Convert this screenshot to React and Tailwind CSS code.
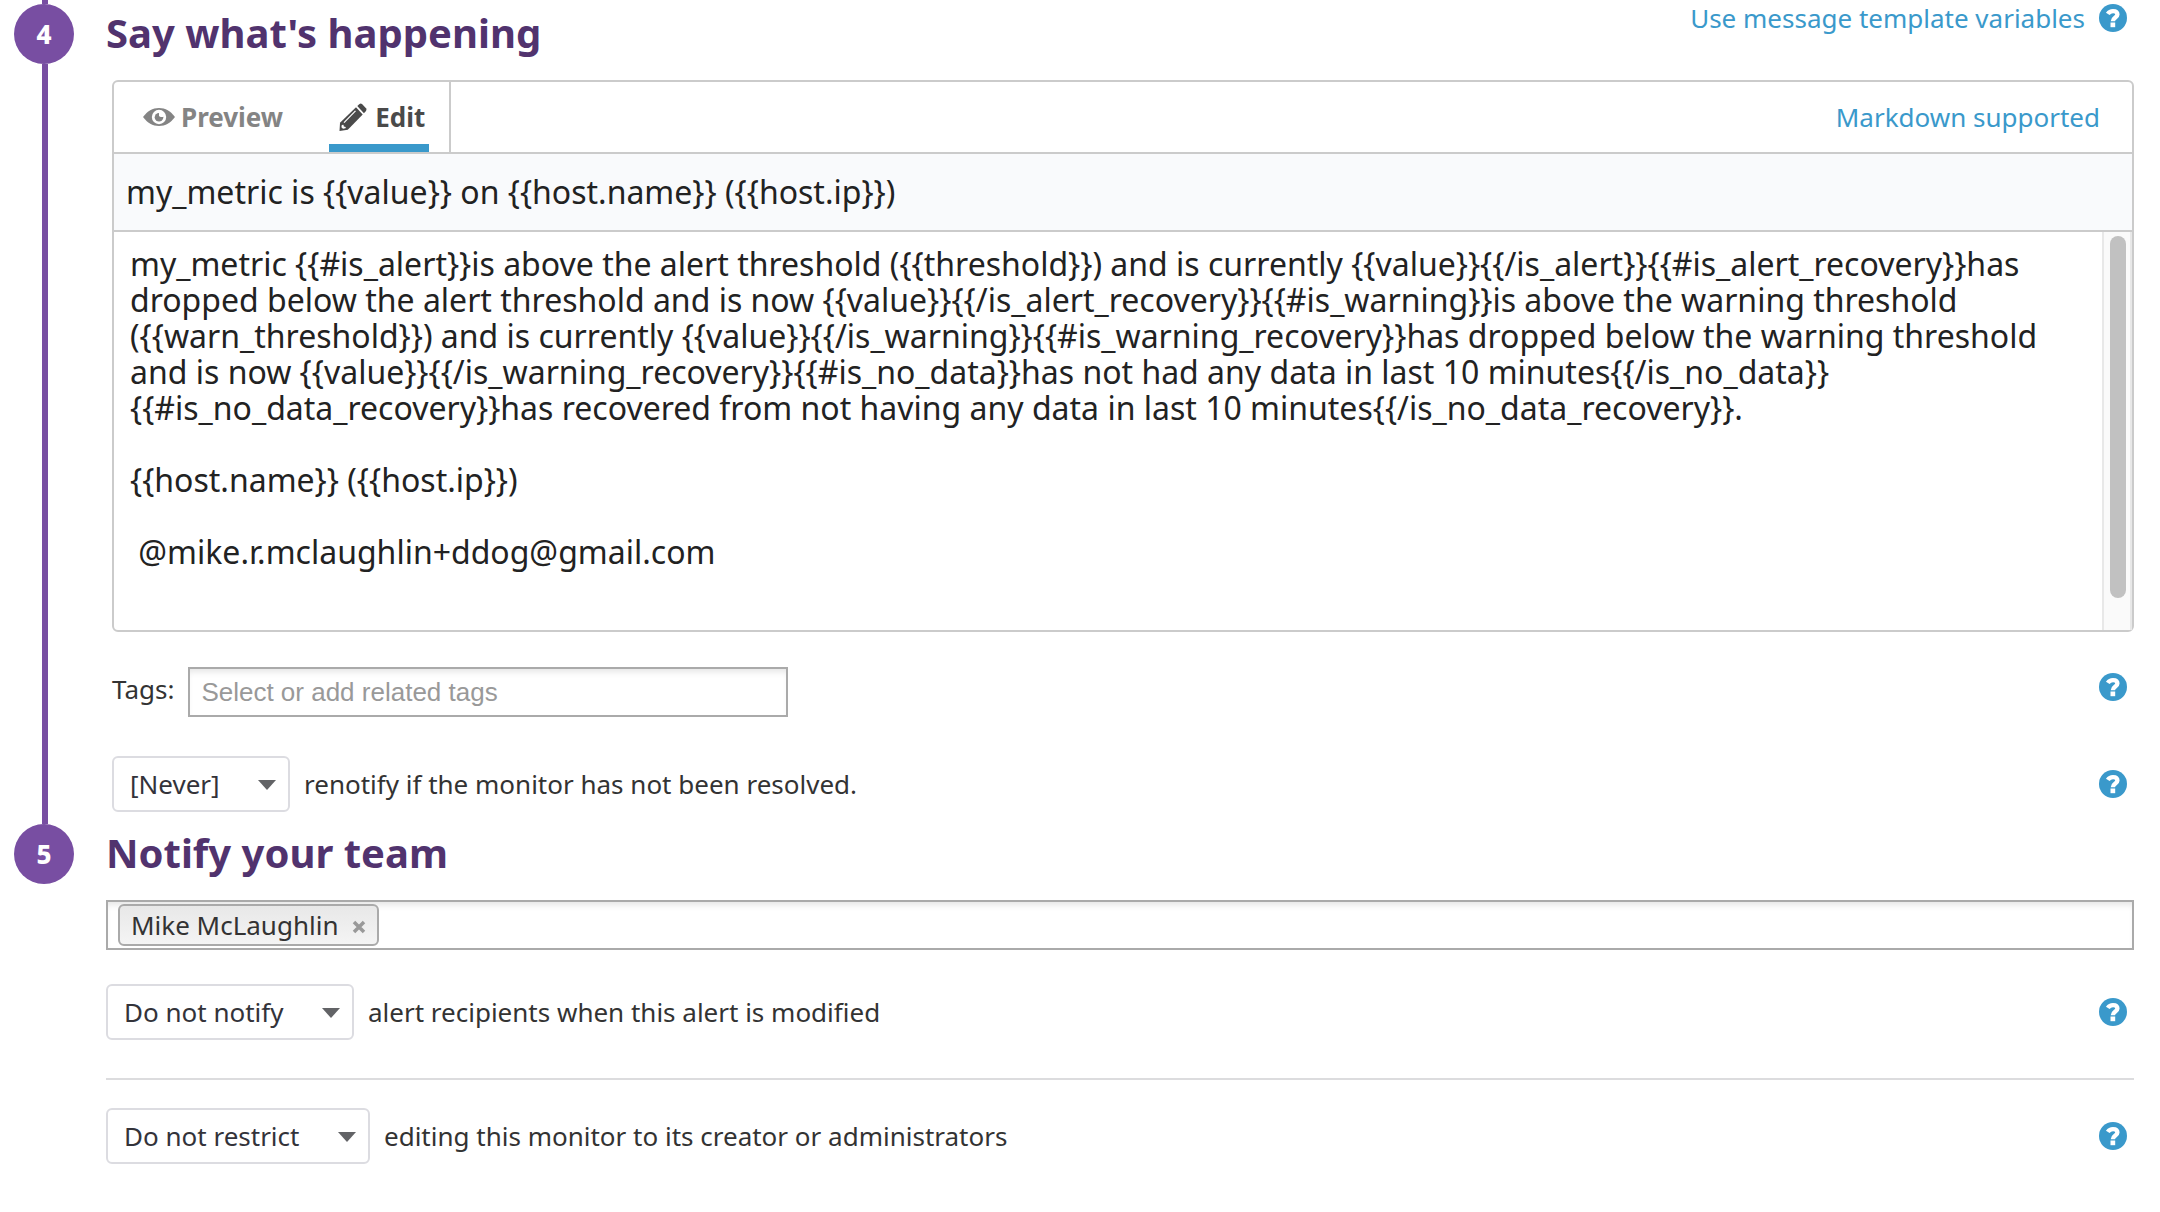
import React from "react";

const message = `my_metric {{#is_alert}}is above the alert threshold ({{threshold}}) and is currently {{value}}{{/is_alert}}{{#is_alert_recovery}}has dropped below the alert threshold and is now {{value}}{{/is_alert_recovery}}{{#is_warning}}is above the warning threshold ({{warn_threshold}}) and is currently {{value}}{{/is_warning}}{{#is_warning_recovery}}has dropped below the warning threshold and is now {{value}}{{/is_warning_recovery}}{{#is_no_data}}has not had any data in last 10 minutes{{/is_no_data}} {{#is_no_data_recovery}}has recovered from not having any data in last 10 minutes{{/is_no_data_recovery}}.

{{host.name}} ({{host.ip}})

 @mike.r.mclaughlin+ddog@gmail.com`;

function HelpButton({ label }) {
  return (
    <button type="button" aria-label={label} className="block h-7 w-7 shrink-0 text-[#3a99cb]">
      <svg viewBox="0 0 28 28" className="h-7 w-7" aria-hidden="true">
        <circle cx="14" cy="14" r="14" fill="currentColor" />
        <path d="M8.800 9.900C10.200 7.800 12 7.100 14 7.100C16.800 7.100 18.400 8.500 18.400 10.600C18.400 13.600 13.900 13.600 13.900 17.300" fill="none" stroke="#fff" strokeWidth="4.400" />
        <rect x="11.500" y="18.500" width="4.700" height="4.700" fill="#fff" />
      </svg>
    </button>
  );
}

function EyeIcon() {
  return (
    <svg viewBox="0 0 32 18" className="h-[18px] w-8" aria-hidden="true">
      <path fill="currentColor" d="M0 9C4.500 3 9.500 0 16 0S27.500 3 32 9C27.500 15 22.500 18 16 18S4.500 15 0 9Z" />
      <circle cx="16" cy="9" r="7.200" fill="#fff" />
      <circle cx="16" cy="9.200" r="4.300" fill="currentColor" />
      <path fill="#fff" d="M16 4.500H20.500V9H17.800A1.800 1.800 0 0 1 16 7.200Z" />
    </svg>
  );
}

function PencilIcon() {
  return (
    <svg viewBox="0 0 28 28" className="h-7 w-7" aria-hidden="true">
      <path fill="currentColor" d="M18.300 3L20.500 0.900Q21.800 0 23 1.100L27 5.300Q28 6.700 27 7.900L24.900 10.200Z" />
      <path fill="currentColor" d="M17 4.200L23.700 11.400L8.800 26.700L0.500 28L1 19.800Z" />
      <path stroke="#fff" strokeWidth="1.200" d="M16.500 7.800L5 19.600" />
      <path fill="#fff" d="M2.800 22L4.500 21.700L4.800 23.500L6.800 23.900L6.500 25.300L4 25.800L2.400 24.300Z" />
    </svg>
  );
}

function Step({ number, lead, tail, children }) {
  return (
    <section className="flex">
      <div className="flex w-[106px] shrink-0 flex-col pl-[14px]">
        <div className={lead ? "ml-7 h-1 w-1.5 bg-[#784ea2]" : "hidden"} />
        <div className="flex h-[60px] w-[60px] shrink-0 items-center justify-center rounded-full bg-[#784ea2] text-[26px] font-extrabold text-white">
          {number}
        </div>
        <div className={tail ? "ml-7 w-1.5 flex-1 bg-[#784ea2]" : "hidden"} />
      </div>
      <div className="min-w-0 flex-1">{children}</div>
    </section>
  );
}

function SelectRow({ id, value, label, className }) {
  return (
    <div className={"flex items-center " + className}>
      <div className="relative">
        <select
          id={id}
          className="block h-14 appearance-none rounded-md border-2 border-[#dcdce1] bg-white pr-[68px] pl-4 text-[26px] text-[#33333a]"
        >
          <option>{value}</option>
        </select>
        <svg viewBox="0 0 18 10" className="pointer-events-none absolute top-6 right-3.5 h-2.5 w-[18px]" aria-hidden="true">
          <path d="M0 0H18L9 10Z" fill="#626366" />
        </svg>
      </div>
      <label htmlFor={id} className="ml-3.5 flex-1">
        {label}
      </label>
      <HelpButton label={"Help: " + label} />
    </div>
  );
}

export default function App() {
  return (
    <main className="min-h-screen bg-white pr-[26px] font-['Noto_Sans',sans-serif] text-[26px] leading-9 text-[#333]">
      <Step number="4" lead tail>
        <header className="flex items-start justify-between">
          <h2 className="pt-1 text-[40px] leading-[58px] font-bold text-[#51336e]">Say what's happening</h2>
          <div className="flex items-center gap-3.5 pr-[7px]">
            <a href="#variables" className="text-[#3a99cb]">
              Use message template variables
            </a>
            <HelpButton label="Help: message template variables" />
          </div>
        </header>

        <div className="mt-[18px] ml-1.5 rounded-md border-2 border-[#cbcbcb]">
          <div className="flex items-stretch border-b-2 border-[#cbcbcb]">
            <div role="tablist" className="flex h-[70px] items-stretch border-r-2 border-[#cbcbcb] pr-5 pl-[21px] font-bold">
              <button type="button" role="tab" aria-selected="false" className="flex items-center gap-1.5 px-2 text-[#848484]">
                <EyeIcon />
                Preview
              </button>
              <button type="button" role="tab" aria-selected="true" className="ml-[38px] flex items-center gap-2 border-b-8 border-[#3a99cb] pt-2 pr-1 pl-2.5 text-[#4a4a4a]">
                <PencilIcon />
                Edit
              </button>
            </div>
            <a href="#markdown" className="ml-auto self-center pr-8 text-[#3a99cb]">
              Markdown supported
            </a>
          </div>
          <input
            type="text"
            aria-label="Message title"
            defaultValue="my_metric is {{value}} on {{host.name}} ({{host.ip}})"
            className="block h-[78px] w-full border-b-2 border-[#cbcbcb] bg-[#f9fafc] px-3 pb-0.5 text-[32px] text-[#222]"
          />
          <div className="flex h-[398px] items-stretch">
            <textarea
              aria-label="Message body"
              defaultValue={message}
              className="block min-w-0 flex-1 resize-none overflow-hidden py-3.5 pr-10 pl-4 text-[32px] leading-9 text-[#222]"
            />
            <div className="w-[30px] border-r-2 border-l-2 border-[#e8e8e8] bg-[#fafafa] px-1.5 pt-1" aria-hidden="true">
              <div className="h-[362px] w-4 rounded-full bg-[#c1c1c1]" />
            </div>
          </div>
        </div>

        <div className="mt-[35px] mr-[7px] ml-1.5 flex items-start">
          <label htmlFor="tags" className="mr-3.5 pt-1">
            Tags:
          </label>
          <input
            id="tags"
            type="text"
            placeholder="Select or add related tags"
            className="h-[50px] w-[600px] border-2 border-[#aaa] px-[11px] font-['Liberation_Sans',sans-serif] text-[26px] shadow-[inset_0_6px_6px_-3px_#e6e6e6] placeholder:text-[#999]"
          />
          <div className="mt-1.5 ml-auto">
            <HelpButton label="Help: tags" />
          </div>
        </div>

        <SelectRow id="renotify" value="[Never]" label="renotify if the monitor has not been resolved." className="mt-[39px] mr-[7px] mb-3 ml-1.5" />
      </Step>

      <Step number="5">
        <h2 className="text-[40px] leading-[58px] font-bold text-[#51336e]">Notify your team</h2>
        <div className="mt-[18px] flex h-[50px] items-center border-2 border-[#aaa] pl-2.5 shadow-[inset_0_6px_6px_-3px_#e6e6e6]">
          <span className="flex h-[42px] items-center gap-3.5 rounded-md border-2 border-[#aaa] bg-linear-to-b from-[#e8e8e8] to-[#f4f4f4] px-[11px]">
            Mike McLaughlin
            <button type="button" aria-label="Remove Mike McLaughlin" className="text-[#999]">
              <svg viewBox="0 0 14 14" className="mt-1 h-3.5 w-3.5" aria-hidden="true">
                <path d="M2 2L12 12M12 2L2 12" stroke="currentColor" strokeWidth="3.500" />
              </svg>
            </button>
          </span>
          <input type="text" aria-label="Add team member" className="min-w-0 flex-1 bg-transparent outline-none" />
        </div>

        <SelectRow id="notify" value="Do not notify" label="alert recipients when this alert is modified" className="mt-[34px] mr-[7px]" />
        <hr className="mt-[38px] border-t-2 border-[#dcdcde]" />
        <SelectRow id="restrict" value="Do not restrict" label="editing this monitor to its creator or administrators" className="mt-7 mr-[7px]" />
      </Step>
    </main>
  );
}
